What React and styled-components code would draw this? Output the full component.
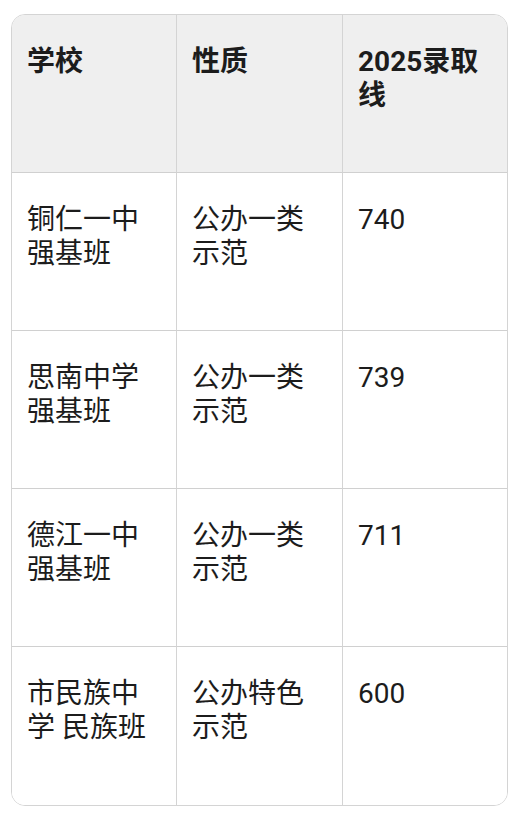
import React from "react";
import styled, { createGlobalStyle } from "styled-components";

const GlobalStyle = createGlobalStyle`
  html, body {
    margin: 0;
    padding: 0;
    background: #ffffff;
  }
  body {
    font-family: Roboto, "Noto Sans CJK SC", sans-serif;
    color: #1c1c1c;
  }
`;

const columns = ["学校", "性质", "2025录取线"];

const rows = [
  ["铜仁一中强基班", "公办一类示范", "740"],
  ["思南中学强基班", "公办一类示范", "739"],
  ["德江一中强基班", "公办一类示范", "711"],
  ["市民族中学 民族班", "公办特色示范", "600"],
];

const App = () => {
  return (
    <>
      <GlobalStyle />
      <Page>
        <TableWrap>
          <Grid>
            {columns.map((title, i) => (
              <Cell key={title} header last={i === columns.length - 1}>
                {title}
              </Cell>
            ))}
            {rows.map((row, r) =>
              row.map((value, c) => (
                <Cell
                  key={`${r}-${c}`}
                  last={c === row.length - 1}
                  bottom={r === rows.length - 1}
                >
                  {value}
                </Cell>
              ))
            )}
          </Grid>
        </TableWrap>
      </Page>
    </>
  );
};

const Page = styled.div`
  padding: 14px 0 0 11px;
`;

const TableWrap = styled.div`
  width: 497px;
  box-sizing: border-box;
  border: 1.5px solid #d4d4d4;
  border-radius: 14px;
  overflow: hidden;
`;

const Grid = styled.div`
  display: grid;
  grid-template-columns: 165px 166px 1fr;
  grid-auto-rows: 158px;
`;

const Cell = styled.div`
  box-sizing: border-box;
  padding: 30px 16px 0 15px;
  font-size: 28px;
  line-height: 34px;
  font-weight: ${(p) => (p.header ? 700 : 400)};
  background: ${(p) => (p.header ? "#efefef" : "#ffffff")};
  border-right: ${(p) => (p.last ? "none" : "1.5px solid #d4d4d4")};
  border-bottom: ${(p) => (p.bottom ? "none" : "1.5px solid #d0d0d0")};
  word-break: break-all;
`;

export default App;
